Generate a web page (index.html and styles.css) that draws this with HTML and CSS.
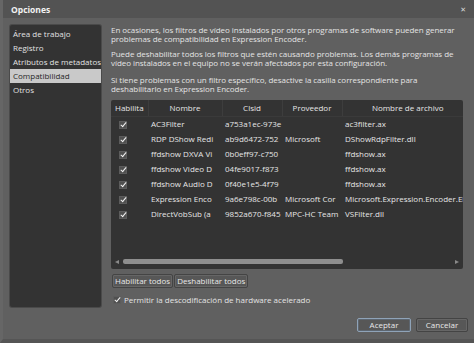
FILE: index.html
```html
<!DOCTYPE html>
<html lang="es">
<head>
<meta charset="utf-8">
<link rel="stylesheet" href="styles.css">
</head>
<body>
<div class="window">
  <div class="titlebar">
    <span class="title">Opciones</span>
    <span class="close">✕</span>
  </div>
  <div class="content">
    <ul class="sidebar">
      <li>Área de trabajo</li>
      <li>Registro</li>
      <li>Atributos de metadatos</li>
      <li class="selected">Compatibilidad</li>
      <li>Otros</li>
    </ul>
    <div class="main">
      <p class="p1">En ocasiones, los filtros de vídeo instalados por otros programas de software pueden generar problemas de compatibilidad en Expression Encoder.</p>
      <p class="p2">Puede deshabilitar todos los filtros que estén causando problemas. Los demás programas de vídeo instalados en el equipo no se verán afectados por esta configuración.</p>
      <p class="p3">Si tiene problemas con un filtro específico, desactive la casilla correspondiente para deshabilitarlo en Expression Encoder.</p>
      <div class="grid">
        <div class="grid-scroll">
          <table>
            <colgroup>
              <col class="c1"><col class="c2"><col class="c3"><col class="c4"><col class="c5">
            </colgroup>
            <thead>
              <tr><th class="left">Habilita</th><th>Nombre</th><th>Clsid</th><th>Proveedor</th><th>Nombre de archivo</th></tr>
            </thead>
            <tbody>
              <tr><td class="chk"><span class="cb"></span></td><td>AC3Filter</td><td>a753a1ec-973e</td><td></td><td>ac3filter.ax</td></tr>
              <tr><td class="chk"><span class="cb"></span></td><td>RDP DShow Redi</td><td>ab9d6472-752</td><td>Microsoft</td><td>DShowRdpFilter.dll</td></tr>
              <tr><td class="chk"><span class="cb"></span></td><td>ffdshow DXVA Vi</td><td>0b0eff97-c750</td><td></td><td>ffdshow.ax</td></tr>
              <tr><td class="chk"><span class="cb"></span></td><td>ffdshow Video D</td><td>04fe9017-f873</td><td></td><td>ffdshow.ax</td></tr>
              <tr><td class="chk"><span class="cb"></span></td><td>ffdshow Audio D</td><td>0f40e1e5-4f79</td><td></td><td>ffdshow.ax</td></tr>
              <tr><td class="chk"><span class="cb"></span></td><td>Expression Enco</td><td>9a6e798c-00b</td><td>Microsoft Cor</td><td>Microsoft.Expression.Encoder.EE</td></tr>
              <tr><td class="chk"><span class="cb"></span></td><td>DirectVobSub (a</td><td>9852a670-f845</td><td>MPC-HC Team</td><td>VSFilter.dll</td></tr>
            </tbody>
          </table>
        </div>
        <div class="hscroll">
          <span class="arrow arrow-left"></span>
          <span class="track"><span class="thumb"></span></span>
          <span class="arrow arrow-right"></span>
        </div>
      </div>
      <div class="actions">
        <button class="btn">Habilitar todos</button>
        <button class="btn">Deshabilitar todos</button>
      </div>
      <label class="option"><span class="cb"></span>Permitir la descodificación de hardware acelerado</label>
    </div>
  </div>
  <div class="footer">
    <button class="btn btn-dlg default">Aceptar</button>
    <button class="btn btn-dlg">Cancelar</button>
  </div>
</div>
</body>
</html>
```

FILE: styles.css
```css
* { box-sizing: border-box; }
html, body { margin: 0; padding: 0; }
body {
  width: 474px;
  height: 343px;
  overflow: hidden;
  background: #5e5e5e;
  font-family: "Open Sans", "Noto Sans", "DejaVu Sans", sans-serif;
  font-size: 8px;
  color: #e4e4e4;
}
.window {
  width: 474px;
  height: 343px;
  display: flex;
  flex-direction: column;
  background: #606060;
  border-left: 3px solid #666;
  border-bottom: 4px solid #555;
}
.titlebar {
  height: 18px;
  background: #535353;
  display: flex;
  align-items: center;
  justify-content: space-between;
  padding: 0 6px 0 8px;
}
.title {
  font-weight: 700;
  font-size: 8.5px;
  color: #f2f2f2;
}
.close {
  font-size: 7px;
  color: #d8d8d8;
  margin-right: 2px;
}
.content {
  display: flex;
  padding: 7px 0 0 7px;
  height: 289px;
}
.sidebar {
  list-style: none;
  margin: 0;
  padding: 2px 0 0 0;
  width: 91px;
  height: 282px;
  background: #333333;
  border-radius: 2px;
  box-shadow: 0 0 0 1px #4a4a4a;
}
.sidebar li {
  height: 14px;
  line-height: 14px;
  padding-left: 3px;
  white-space: nowrap;
  overflow: hidden;
  color: #e2e2e2;
}
.sidebar li.selected {
  background: #c9c9c9;
  color: #262626;
}
.main {
  margin-left: 10px;
  width: 352px;
  display: flex;
  flex-direction: column;
}
.main p {
  margin: 0;
  line-height: 9px;
  letter-spacing: -0.05px;
}
.p1 { margin-top: 0; }
.p2 { margin-top: 6px !important; }
.p3 { margin-top: 8px !important; }
.grid {
  margin-top: 7px;
  height: 169px;
  background: #333333;
  border-radius: 2px;
  display: flex;
  flex-direction: column;
  overflow: hidden;
}
.grid-scroll {
  flex: 1;
  overflow: hidden;
}
table {
  table-layout: fixed;
  border-collapse: collapse;
  width: 362px;
}
col.c1 { width: 37px; }
col.c2 { width: 74px; }
col.c3 { width: 60px; }
col.c4 { width: 60px; }
col.c5 { width: 131px; }
th {
  height: 16px;
  font-weight: 400;
  color: #e6e6e6;
  text-align: center;
  white-space: nowrap;
  overflow: hidden;
  padding: 0 2px;
  border-left: 1px solid #3d3d3d;
  border-bottom: 1px solid #3a3a3a;
}
th.left { text-align: left; border-left: none; padding-left: 4px; }
td {
  height: 15px;
  white-space: nowrap;
  overflow: hidden;
  padding: 0 3px;
  color: #e6e6e6;
}
td.chk { padding-left: 8px; }
.cb {
  display: inline-block;
  width: 8px;
  height: 8px;
  background: #505050;
  border: 1px solid #5c5c5c;
  position: relative;
  vertical-align: middle;
}
.cb::after {
  content: "";
  position: absolute;
  left: 2px;
  top: -1px;
  width: 2px;
  height: 5px;
  border: solid #f4f4f4;
  border-width: 0 1.6px 1.6px 0;
  transform: rotate(40deg);
}
.hscroll {
  height: 12px;
  display: flex;
  align-items: center;
  padding: 0 4px 3px 4px;
}
.arrow {
  width: 0;
  height: 0;
  border-top: 2.5px solid transparent;
  border-bottom: 2.5px solid transparent;
}
.arrow-left { border-right: 4px solid #8a8a8a; }
.arrow-right { border-left: 4px solid #8a8a8a; }
.track {
  flex: 1;
  height: 5px;
  margin: 0 4px;
  position: relative;
}
.thumb {
  display: block;
  width: 220px;
  height: 5px;
  background: #8e8e8e;
  border-radius: 2px;
}
.actions {
  display: flex;
  gap: 1px;
  margin-top: 5px;
  margin-left: 1px;
}
.btn {
  font-family: inherit;
  font-size: 8px;
  color: #e8e8e8;
  background: #575757;
  border: 1px solid #444;
  border-radius: 2px;
  height: 14px;
  padding: 0 2px;
  line-height: 12px;
  box-shadow: inset 0 0 0 1px #666;
}
.option {
  display: flex;
  align-items: center;
  gap: 3px;
  margin-top: 6px;
  margin-left: 2px;
}
.footer {
  display: flex;
  justify-content: flex-end;
  gap: 5px;
  padding: 11px 6px 0 0;
}
.btn-dlg { width: 54px; }
.btn-dlg + .btn-dlg { width: 52px; }
.default {
  border-color: #8fa3b8;
  box-shadow: inset 0 0 0 1px #5d6670;
}
```
